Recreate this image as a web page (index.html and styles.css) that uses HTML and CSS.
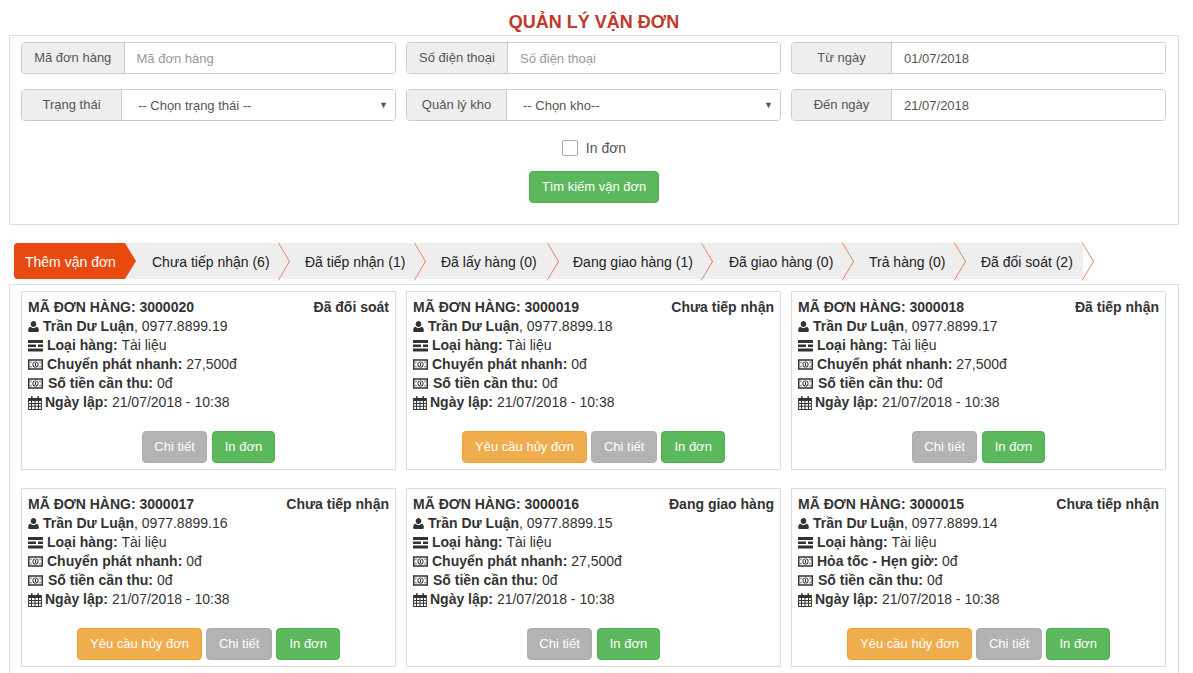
FILE: index.html
```html
<!DOCTYPE html>
<html lang="vi">
<head>
<meta charset="utf-8">
<title>Quản lý vận đơn</title>
<link rel="stylesheet" href="styles.css">
</head>
<body>
<svg class="defs" width="0" height="0" aria-hidden="true">
  <symbol id="i-user" viewBox="0 0 13 14"><path d="M6.5 0.5C8.4 0.5 9.8 2.1 9.8 4.1S8.4 7.7 6.5 7.7 3.2 6.1 3.2 4.1 4.6 0.5 6.5 0.5ZM3.2 7.2C4 8.1 5.1 8.7 6.5 8.7S9 8.1 9.8 7.2C11.6 7.4 12.8 8.6 12.8 11.6 12.8 13 12 13.6 10.9 13.6H2.1C1 13.6 0.2 13 0.2 11.6 0.2 8.6 1.4 7.4 3.2 7.2Z" fill="currentColor"/></symbol>
  <symbol id="i-tasks" viewBox="0 0 15 12"><path d="M0 0H15V3H0ZM0 4.5H8V7H0ZM10 4.5H15V7H10ZM0 8.5H15V11.5H0Z" fill="currentColor"/></symbol>
  <symbol id="i-money" viewBox="0 0 16 11"><path fill-rule="evenodd" d="M0 0H16V11H0ZM1.6 1.6V9.4H14.4V1.6ZM8 2.2A3.3 3.3 0 1 1 8 8.8 3.3 3.3 0 1 1 8 2.2ZM8 3.2A2.3 2.3 0 1 0 8 7.8 2.3 2.3 0 1 0 8 3.2ZM7.4 4H8.6V7H7.4ZM2.6 2.6H4.4L2.6 4.4ZM11.6 2.6H13.4V4.4ZM2.6 6.6 4.4 8.4H2.6ZM13.4 6.6V8.4H11.6Z" fill="currentColor"/></symbol>
  <symbol id="i-cal" viewBox="0 0 14 14"><path fill-rule="evenodd" d="M3 0.2H4.6V2H9.4V0.2H11V2H13.9V13.9H0.1V2H3ZM1.1 5V6.9H3V5ZM4 5V6.9H6.5V5ZM7.5 5V6.9H10V5ZM11 5V6.9H12.9V5ZM1.1 7.9V9.8H3V7.9ZM4 7.9V9.8H6.5V7.9ZM7.5 7.9V9.8H10V7.9ZM11 7.9V9.8H12.9V7.9ZM1.1 10.8V12.9H3V10.8ZM4 10.8V12.9H6.5V10.8ZM7.5 10.8V12.9H10V10.8ZM11 10.8V12.9H12.9V10.8Z" fill="currentColor"/></symbol>
</svg>

<h1 class="title">QUẢN LÝ VẬN ĐƠN</h1>

<section class="panel filter">
  <div class="fields">
    <div class="group"><span class="addon w103">Mã đơn hàng</span><input class="control" placeholder="Mã đơn hàng"></div>
    <div class="group"><span class="addon w101">Số điện thoại</span><input class="control" placeholder="Số điện thoại"></div>
    <div class="group"><span class="addon w100">Từ ngày</span><input class="control" value="01/07/2018"></div>
    <div class="group"><span class="addon w100">Trạng thái</span><div class="control select"><span>-- Chọn trạng thái --</span><i class="caret">▼</i></div></div>
    <div class="group"><span class="addon w100">Quản lý kho</span><div class="control select"><span>-- Chọn kho--</span><i class="caret">▼</i></div></div>
    <div class="group"><span class="addon w100">Đến ngày</span><input class="control" value="21/07/2018"></div>
  </div>
  <label class="check"><span class="box"></span>In đơn</label>
  <div class="search"><button class="btn green">Tìm kiếm vận đơn</button></div>
</section>

<nav class="tabs">
  <a class="tab first">Thêm vận đơn</a>
  <a class="tab t1">Chưa tiếp nhận (6)</a>
  <a class="tab t2">Đã tiếp nhận (1)</a>
  <a class="tab t3">Đã lấy hàng (0)</a>
  <a class="tab t4">Đang giao hàng (1)</a>
  <a class="tab t5">Đã giao hàng (0)</a>
  <a class="tab t6">Trả hàng (0)</a>
  <a class="tab t7">Đã đối soát (2)</a>
</nav>

<section class="panel list">
  <article class="card">
    <div class="head"><b>MÃ ĐƠN HÀNG: 3000020</b><b class="status">Đã đối soát</b></div>
    <div class="line"><svg class="ic user"><use href="#i-user"/></svg><b>Trần Dư Luận</b>, 0977.8899.19</div>
    <div class="line"><svg class="ic tasks"><use href="#i-tasks"/></svg><b>Loại hàng:</b> Tài liệu</div>
    <div class="line"><svg class="ic money"><use href="#i-money"/></svg><b>Chuyển phát nhanh:</b> 27,500đ</div>
    <div class="line"><svg class="ic money wide"><use href="#i-money"/></svg><b>Số tiền cần thu:</b> 0đ</div>
    <div class="line"><svg class="ic cal"><use href="#i-cal"/></svg><b>Ngày lập:</b> 21/07/2018 - 10:38</div>
    <div class="actions"><button class="btn gray">Chi tiết</button><button class="btn green">In đơn</button></div>
  </article>
  <article class="card">
    <div class="head"><b>MÃ ĐƠN HÀNG: 3000019</b><b class="status">Chưa tiếp nhận</b></div>
    <div class="line"><svg class="ic user"><use href="#i-user"/></svg><b>Trần Dư Luận</b>, 0977.8899.18</div>
    <div class="line"><svg class="ic tasks"><use href="#i-tasks"/></svg><b>Loại hàng:</b> Tài liệu</div>
    <div class="line"><svg class="ic money"><use href="#i-money"/></svg><b>Chuyển phát nhanh:</b> 0đ</div>
    <div class="line"><svg class="ic money wide"><use href="#i-money"/></svg><b>Số tiền cần thu:</b> 0đ</div>
    <div class="line"><svg class="ic cal"><use href="#i-cal"/></svg><b>Ngày lập:</b> 21/07/2018 - 10:38</div>
    <div class="actions"><button class="btn orange">Yêu cầu hủy đơn</button><button class="btn gray">Chi tiết</button><button class="btn green">In đơn</button></div>
  </article>
  <article class="card">
    <div class="head"><b>MÃ ĐƠN HÀNG: 3000018</b><b class="status">Đã tiếp nhận</b></div>
    <div class="line"><svg class="ic user"><use href="#i-user"/></svg><b>Trần Dư Luận</b>, 0977.8899.17</div>
    <div class="line"><svg class="ic tasks"><use href="#i-tasks"/></svg><b>Loại hàng:</b> Tài liệu</div>
    <div class="line"><svg class="ic money"><use href="#i-money"/></svg><b>Chuyển phát nhanh:</b> 27,500đ</div>
    <div class="line"><svg class="ic money wide"><use href="#i-money"/></svg><b>Số tiền cần thu:</b> 0đ</div>
    <div class="line"><svg class="ic cal"><use href="#i-cal"/></svg><b>Ngày lập:</b> 21/07/2018 - 10:38</div>
    <div class="actions"><button class="btn gray">Chi tiết</button><button class="btn green">In đơn</button></div>
  </article>
  <article class="card">
    <div class="head"><b>MÃ ĐƠN HÀNG: 3000017</b><b class="status">Chưa tiếp nhận</b></div>
    <div class="line"><svg class="ic user"><use href="#i-user"/></svg><b>Trần Dư Luận</b>, 0977.8899.16</div>
    <div class="line"><svg class="ic tasks"><use href="#i-tasks"/></svg><b>Loại hàng:</b> Tài liệu</div>
    <div class="line"><svg class="ic money"><use href="#i-money"/></svg><b>Chuyển phát nhanh:</b> 0đ</div>
    <div class="line"><svg class="ic money wide"><use href="#i-money"/></svg><b>Số tiền cần thu:</b> 0đ</div>
    <div class="line"><svg class="ic cal"><use href="#i-cal"/></svg><b>Ngày lập:</b> 21/07/2018 - 10:38</div>
    <div class="actions"><button class="btn orange">Yêu cầu hủy đơn</button><button class="btn gray">Chi tiết</button><button class="btn green">In đơn</button></div>
  </article>
  <article class="card">
    <div class="head"><b>MÃ ĐƠN HÀNG: 3000016</b><b class="status">Đang giao hàng</b></div>
    <div class="line"><svg class="ic user"><use href="#i-user"/></svg><b>Trần Dư Luận</b>, 0977.8899.15</div>
    <div class="line"><svg class="ic tasks"><use href="#i-tasks"/></svg><b>Loại hàng:</b> Tài liệu</div>
    <div class="line"><svg class="ic money"><use href="#i-money"/></svg><b>Chuyển phát nhanh:</b> 27,500đ</div>
    <div class="line"><svg class="ic money wide"><use href="#i-money"/></svg><b>Số tiền cần thu:</b> 0đ</div>
    <div class="line"><svg class="ic cal"><use href="#i-cal"/></svg><b>Ngày lập:</b> 21/07/2018 - 10:38</div>
    <div class="actions"><button class="btn gray">Chi tiết</button><button class="btn green">In đơn</button></div>
  </article>
  <article class="card">
    <div class="head"><b>MÃ ĐƠN HÀNG: 3000015</b><b class="status">Chưa tiếp nhận</b></div>
    <div class="line"><svg class="ic user"><use href="#i-user"/></svg><b>Trần Dư Luận</b>, 0977.8899.14</div>
    <div class="line"><svg class="ic tasks"><use href="#i-tasks"/></svg><b>Loại hàng:</b> Tài liệu</div>
    <div class="line"><svg class="ic money"><use href="#i-money"/></svg><b>Hỏa tốc - Hẹn giờ:</b> 0đ</div>
    <div class="line"><svg class="ic money wide"><use href="#i-money"/></svg><b>Số tiền cần thu:</b> 0đ</div>
    <div class="line"><svg class="ic cal"><use href="#i-cal"/></svg><b>Ngày lập:</b> 21/07/2018 - 10:38</div>
    <div class="actions"><button class="btn orange">Yêu cầu hủy đơn</button><button class="btn gray">Chi tiết</button><button class="btn green">In đơn</button></div>
  </article>
</section>
</body>
</html>
```
FILE: styles.css
```css
* { box-sizing: border-box; }
html, body { height: 673px; overflow: hidden; }
body { margin: 0; padding: 0 14px 0 9px; background: #fff; color: #333; font: 14px/19px "Liberation Sans", Arial, sans-serif; }
.defs { position: absolute; }
.title { margin: 0; height: 35px; padding-top: 12px; text-align: center; color: #c0392b; font-size: 18px; line-height: 21px; font-weight: 700; }
.panel { border: 1px solid #ddd; width: 1170px; }
.filter { height: 190px; padding: 6px 11px 0; }
.fields { display: grid; grid-template-columns: repeat(3, 375px); column-gap: 10px; row-gap: 15px; }
.group { display: flex; height: 32px; border: 1px solid #ccc; border-radius: 4px; overflow: hidden; background: #fff; font-size: 13px; }
.addon { flex: none; display: flex; align-items: center; justify-content: center; background: #eee; border-right: 1px solid #ccc; color: #555; padding-bottom: 2px; }
.w103 { width: 102.5px; } .w101 { width: 101px; } .w100 { width: 100px; }
.control { flex: 1; min-width: 0; border: 0; outline: 0; padding: 0 12px; background: #fff; color: #555; font: 13px "Liberation Sans", Arial, sans-serif; }
.control::placeholder { color: #999; opacity: 1; }
.select { display: flex; align-items: center; justify-content: space-between; padding: 0 7px 0 16px; }
.caret { font-style: normal; font-size: 9px; color: #555; }
.check { display: flex; align-items: center; justify-content: center; gap: 8px; height: 20px; margin-top: 17px; color: #555; }
.box { width: 16px; height: 16px; border: 1px solid #aaa; border-radius: 2px; background: #fff; }
.search { display: flex; justify-content: center; margin-top: 13px; }
.btn { height: 32px; padding: 0 12px 1px; border: 1px solid; border-radius: 4px; color: #fff; font: 13px "Liberation Sans", Arial, sans-serif; }
.green { background: #5cb85c; border-color: #4cae4c; }
.gray { background: #b3b3b3; border-color: #adadad; padding: 0 11.5px 2px; }
.orange { background: #f0ad4e; border-color: #eea236; }
.tabs { display: flex; width: max-content; height: 36px; margin: 18px 0 5px 5px; background: #eee; color: #222; }
.tab { position: relative; display: flex; align-items: center; height: 36px; padding-top: 2px; white-space: nowrap; }
.tab::after { content: ""; position: absolute; right: -2px; top: 5px; width: 26px; height: 26px; border-top: 1px solid #e8693c; border-right: 1px solid #e8693c; transform: scaleX(.6) rotate(45deg); }
.first { width: 122px; padding-left: 11px; background: #e8490f; color: #fff; border-radius: 4px 0 0 4px; clip-path: polygon(0 0, 111px 0, 100% 50%, 111px 100%, 0 100%); }
.first::after { display: none; }
.t1 { width: 154px; padding-left: 16px; }
.t2 { width: 136px; padding-left: 15px; }
.t3 { width: 133px; padding-left: 15px; }
.t4 { width: 154px; padding-left: 14px; }
.t5 { width: 141px; padding-left: 16px; }
.t6 { width: 112px; padding-left: 15px; }
.t7 { width: 117px; padding-left: 15px; }
.t7::after { right: -13px; }
.list { display: grid; grid-template-columns: repeat(3, 375px); grid-auto-rows: 179px; column-gap: 10px; row-gap: 18px; padding: 6px 11px 0; height: 400px; border-bottom: 0; }
.card { display: flex; flex-direction: column; border: 1px solid #ddd; padding: 6px 6px 0; color: #333; }
.head { display: flex; justify-content: space-between; height: 19px; }
.line { display: flex; align-items: center; height: 19px; white-space: pre; }
.ic { flex: none; color: #333; }
.user { width: 11px; height: 13px; margin-right: 4px; }
.tasks { width: 15px; height: 12px; margin-right: 4px; }
.money { width: 15px; height: 11px; margin-right: 4px; }
.wide { margin-right: 5px; }
.cal { width: 14px; height: 14px; margin-right: 3px; }
.actions { display: flex; justify-content: center; gap: 4.5px; margin-top: 19px; }
```
